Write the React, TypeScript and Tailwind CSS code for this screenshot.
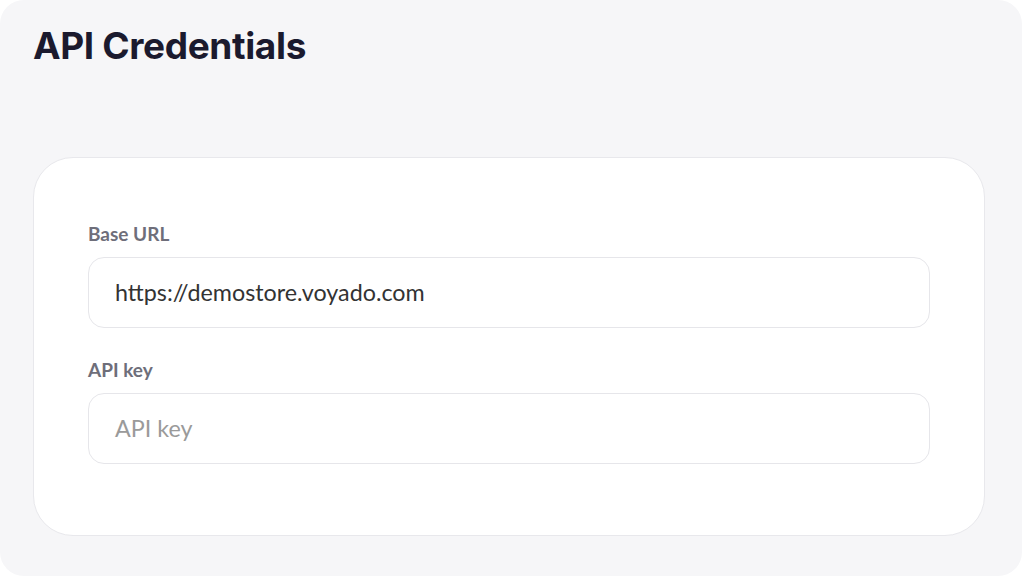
export default function App() {
  return (
    <div className="bg-white w-[1022px] h-[576px]">
      <div className="h-full rounded-[24px] bg-[#f6f6f8] pl-[33px] pr-[37px] pt-[22px] pb-[40px] flex flex-col">
        <h1 className="text-[37px] leading-[48px] font-bold tracking-[-0.01em] text-[#1b1a2e] font-['Inter',sans-serif]">
          API Credentials
        </h1>
        <div className="mt-auto h-[379px] rounded-[40px] bg-white border border-[#e8e8ec] px-[54px] pt-[64px] font-['Lato',sans-serif]">
          <label className="block text-[19px] leading-[24px] font-bold text-[#6e6e7a]">Base URL</label>
          <div className="mt-[11px] h-[71px] rounded-[16px] border border-[#e6e6ea] flex items-center px-[26px] text-[23.3px] text-[#333333]">
            https://demostore.voyado.com
          </div>
          <label className="block mt-[30px] text-[19px] leading-[24px] font-bold text-[#6e6e7a]">API key</label>
          <div className="mt-[11px] h-[71px] rounded-[16px] border border-[#e6e6ea] flex items-center px-[26px] text-[23.3px] text-[#9a9a9a]">
            API key
          </div>
        </div>
      </div>
    </div>
  );
}
